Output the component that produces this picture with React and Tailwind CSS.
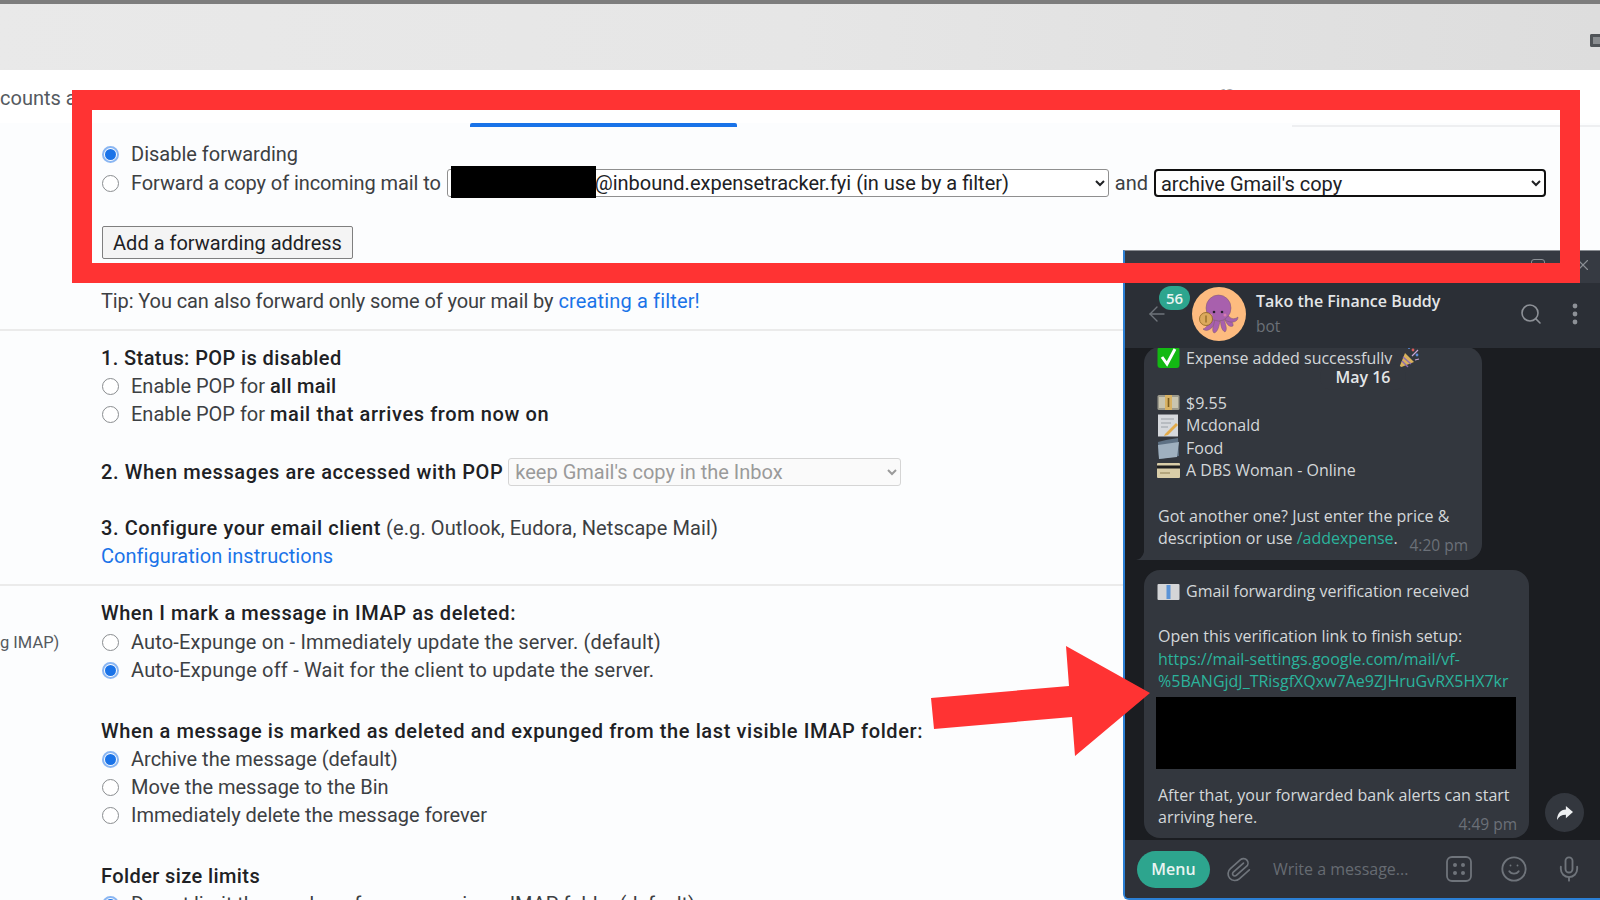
import React from "react";
import { ArrowLeft, Search, Paperclip, Smile, Mic, X } from "lucide-react";

function Radio({ on }) {
  return on ? (
    <span className="ml-[1px] mr-[12px] flex h-[17px] w-[17px] shrink-0 items-center justify-center rounded-full border-2 border-[#8ab6f2]">
      <span className="h-[11px] w-[11px] rounded-full bg-[#1a73e8]" />
    </span>
  ) : (
    <span className="ml-[1px] mr-[12px] h-[17px] w-[17px] shrink-0 rounded-full border-[1.5px] border-[#8a8d90] bg-white" />
  );
}

function Row({ children, className = "" }) {
  return <div className={"flex h-7 items-center whitespace-nowrap " + className}>{children}</div>;
}

function RadioRow({ on, children, className = "" }) {
  return (
    <Row className={className}>
      <Radio on={on} />
      <span>{children}</span>
    </Row>
  );
}

const B = ({ children, className = "tracking-[0.6px]" }) => (
  <b className={"font-medium text-[#202124] " + className}>{children}</b>
);

function Octopus() {
  return (
    <svg viewBox="0 0 54 54" className="h-[54px] w-[54px] shrink-0">
      <circle cx="27" cy="27" r="27" fill="#fdbb7f" />
      <g fill="#a860ad" stroke="#7d5a6a" strokeWidth="0.5">
        <path d="M19 30 C17 36 15 41 11 42 C15 46 21 41 24 35 Z" />
        <path d="M23 32 C22 38 19 43 22 46 C26 45 27 39 28 34 Z" />
        <path d="M28 32 C29 38 29 43 33 45 C36 42 33 37 32 32 Z" />
        <path d="M32 31 C34 36 37 41 41 39 C42 36 38 33 36 29 Z" />
        <path d="M35 27 C38 32 42 33 46 30 C46 35 40 37 33 33 Z" />
        <ellipse cx="26.5" cy="21" rx="12.5" ry="13" />
      </g>
      <circle cx="22" cy="25" r="1.3" fill="#2a1f2f" />
      <circle cx="30" cy="25" r="1.3" fill="#2a1f2f" />
      <circle cx="19" cy="28" r="1.5" fill="#d77ab0" />
      <circle cx="33" cy="28" r="1.5" fill="#d77ab0" />
      <circle cx="14" cy="32" r="6.5" fill="#dca95c" stroke="#8a6420" strokeWidth="0.8" />
      <path d="M14 28.5 v7" stroke="#8a6420" strokeWidth="1.2" />
    </svg>
  );
}

const Em = ({ children, className = "" }) => (
  <svg viewBox="0 0 23 23" className={"h-[23px] w-[23px] shrink-0 " + className}>
    {children}
  </svg>
);

const CheckEmoji = () => (
  <Em>
    <rect x="0.5" y="1" width="22" height="21" rx="3" fill="#13b913" />
    <path d="M5 11 L10 18 L18 3" fill="none" stroke="#fff" strokeWidth="3" />
  </Em>
);
const Money = () => (
  <Em>
    <rect x="0.5" y="4" width="22" height="15" rx="1.5" fill="#9c9a8c" />
    <rect x="2" y="6" width="19" height="11" fill="#c9c5b0" />
    <rect x="8" y="4" width="7" height="15" fill="#d8b264" />
    <path d="M11.5 7v9" stroke="#7a5c1e" strokeWidth="1.6" />
  </Em>
);
const Memo = () => (
  <Em>
    <rect x="1" y="0.5" width="20" height="22" fill="#d5d8dc" />
    <path d="M4 5h13M4 9h10M4 13h7" stroke="#9aa0a6" strokeWidth="1" />
    <path d="M8 20 L19 9 L21 11 L11 21 L7 22Z" fill="#e3ab4a" />
  </Em>
);
const Folder = () => (
  <Em>
    <path d="M1 5 L9 3 L21 1 L22 19 L2 22 Z" fill="#5e7184" />
    <path d="M1 8 L22 5 L20 20 L2 22 Z" fill="#9fb0bf" />
  </Em>
);
const Card = () => (
  <Em>
    <rect x="0" y="4" width="23" height="15" rx="1" fill="#d9cda8" />
    <rect x="0" y="6.5" width="23" height="3" fill="#1f1f1f" />
    <path d="M3 14h10" stroke="#a3946a" strokeWidth="1.4" />
  </Em>
);
const Ledger = () => (
  <Em>
    <rect x="0.5" y="4" width="22" height="16" rx="1" fill="#d4d5d7" />
    <rect x="9.5" y="5" width="4" height="14" fill="#5b93d6" />
  </Em>
);
const Popper = () => (
  <Em className="ml-[5px]">
    <path d="M2 22 L8 7 L17 16 Z" fill="#d9b15c" />
    <path d="M5 15 L11 21 M6 11 L14 18" stroke="#8c6bb1" strokeWidth="1.4" />
    <circle cx="16" cy="4" r="1.4" fill="#d85a5a" />
    <circle cx="20" cy="9" r="1.4" fill="#5a8ad8" />
    <circle cx="12" cy="2" r="1.1" fill="#5a8ad8" />
    <path d="M15 10 L21 4 M18 14 L22 13" stroke="#c9a6d8" strokeWidth="1.2" />
  </Em>
);

function Line({ children, className = "" }) {
  return <div className={"flex h-[22.6px] items-center whitespace-nowrap " + className}>{children}</div>;
}

const EmLine = ({ icon, children }) => (
  <Line className="-ml-[1px]">
    <span className="mr-[6px] flex w-[23px] justify-center">{icon}</span>
    <span>{children}</span>
  </Line>
);

function TelegramWindow() {
  return (
    <section className="absolute left-[1123px] top-[250px] flex h-[650px] w-[477px] flex-col overflow-hidden rounded-bl-[6px] border-b-2 border-l-2 border-t border-b-[#2b7fd4] border-l-[#2b7fd4] border-t-[#8a8d92] bg-[#1b1d21] font-['Open_Sans',sans-serif] text-[16px] text-[#d4d7da]">
      <div className="flex h-[32px] shrink-0 items-start justify-end gap-[29px] bg-[#363a42] pr-[8px] pt-[5px] text-[#8b8f95]">
        <span className="mt-[3px] h-[14px] w-[14px] rounded-[3px] border border-[#8b8f95]" />
        <X size={18} strokeWidth={1.5} />
      </div>
      <header className="relative flex h-[65px] shrink-0 items-center bg-[#2b2f36] pb-[3px] pl-[20px] pr-[22px]">
        <ArrowLeft size={24} strokeWidth={1.4} className="mr-[23px] text-[#6f747b]" />
        <Octopus />
        <div className="ml-[10px] flex flex-1 flex-col leading-[25px]">
          <span className="text-[16px] font-semibold text-[#e4e6e8]">Tako the Finance Buddy</span>
          <span className="text-[15.5px] text-[#6c7178]">bot</span>
        </div>
        <Search size={24} strokeWidth={1.6} className="mr-[29px] text-[#8d9197]" />
        <svg viewBox="0 0 6 22" className="h-[22px] w-[6px] text-[#8d9197]" fill="currentColor">
          <circle cx="3" cy="3" r="2.4" />
          <circle cx="3" cy="11" r="2.4" />
          <circle cx="3" cy="19" r="2.4" />
        </svg>
        <span className="absolute left-[34px] top-[3px] flex h-[24px] w-[31px] items-center justify-center rounded-full bg-[#2da58e] text-[15px] font-semibold text-[#e8f4f1]">
          56
        </span>
      </header>
      <div className="relative flex flex-1 flex-col justify-end gap-[10px] overflow-hidden pb-[2px] pl-[19px] leading-[22.6px]">
        <div className="relative w-[338px] shrink-0 rounded-[16px] rounded-bl-none bg-[#33373e] pb-[10px] pl-[14px] pr-[14px]">
          <EmLine icon={<CheckEmoji />}>
            <span className="flex items-center">
              Expense added successfully
              <Popper />
            </span>
          </EmLine>
          <Line />
          <EmLine icon={<Money />}>$9.55</EmLine>
          <EmLine icon={<Memo />}>Mcdonald</EmLine>
          <EmLine icon={<Folder />}>Food</EmLine>
          <EmLine icon={<Card />}>A DBS Woman - Online</EmLine>
          <Line />
          <Line>Got another one? Just enter the price &amp;</Line>
          <Line className="justify-between">
            <span>
              description or use <span className="text-[#2bb39c]">/addexpense</span>.
            </span>
            <span className="mt-[14px] text-[15.5px] text-[#6b7078]">4:20 pm</span>
          </Line>
          <svg viewBox="0 0 8 8" className="absolute -left-[8px] bottom-0 h-[8px] w-[8px] text-[#33373e]" fill="currentColor">
            <path d="M8 0 V8 H0 Q6 7 8 0Z" />
          </svg>
        </div>
        <div className="w-[385px] shrink-0 rounded-[16px] bg-[#33373e] pb-[9px] pl-[14px] pr-[12px] pt-[10px]">
          <EmLine icon={<Ledger />}>Gmail forwarding verification received</EmLine>
          <Line />
          <Line>Open this verification link to finish setup:</Line>
          <Line className="text-[#2bb39c]">https://mail-settings.google.com/mail/vf-</Line>
          <Line className="text-[#2bb39c]">%5BANGjdJ_TRisgfXQxw7Ae9ZJHruGvRX5HX7kr</Line>
          <div className="-ml-[2px] mb-[15px] mt-[4px] h-[72px] w-[360px] bg-black" />
          <Line>After that, your forwarded bank alerts can start</Line>
          <Line className="justify-between">
            <span>arriving here.</span>
            <span className="mt-[13px] text-[15.5px] text-[#6b7078]">4:49 pm</span>
          </Line>
        </div>
        <span className="absolute left-[195px] top-[16px] flex h-[26px] w-[86px] items-center justify-center rounded-[13px] bg-[#33373e] font-semibold text-[#e4e6e8]">
          May 16
        </span>
        <button className="absolute bottom-[8px] right-[16px] flex h-[39px] w-[39px] items-center justify-center rounded-full bg-[#33373e] text-[#eef0f2]">
          <svg viewBox="0 0 20 18" className="h-[16px] w-[18px]" fill="currentColor">
            <path d="M11 1 L19 8 L11 15 V11 C6 11 3 13 1 17 C1 10 5 5 11 5 Z" />
          </svg>
        </button>
      </div>
      <footer className="flex h-[58px] shrink-0 items-center bg-[#2e3138] pl-[12px] text-[#6f747b]">
        <button className="mr-[15px] flex h-[37px] w-[73px] items-center justify-center rounded-full bg-[#2da58e] font-semibold text-[#e8f4f1]">
          Menu
        </button>
        <Paperclip size={27} strokeWidth={1.5} className="mr-[21px] rotate-[4deg]" />
        <span className="w-[173px] text-[#666b72]">Write a message...</span>
        <svg viewBox="0 0 26 26" className="mr-[28px] h-[26px] w-[26px]" fill="none" stroke="currentColor" strokeWidth="1.8">
          <rect x="1" y="1" width="24" height="24" rx="5" />
          <g fill="currentColor" stroke="none">
            <circle cx="9" cy="9" r="2" />
            <circle cx="17" cy="9" r="2" />
            <circle cx="9" cy="17" r="2" />
            <circle cx="17" cy="17" r="2" />
          </g>
        </svg>
        <Smile size={28} strokeWidth={1.6} className="mr-[27px]" />
        <Mic size={28} strokeWidth={1.6} />
      </footer>
    </section>
  );
}

const selectCls = "h-[28px] appearance-auto rounded-[3px] bg-white text-[20px] leading-[24px] text-[#202124]";

export default function App() {
  return (
    <div className="relative h-[900px] w-[1600px] overflow-hidden bg-[#fcfdfe] font-['Roboto',sans-serif] text-[20px] text-[#3c4043]">
      <div className="flex h-[70px] items-center justify-end border-t-4 border-t-[#7d7d7d] bg-gradient-to-r from-[#e9e9e9] via-[#e6e6e6] to-[#dddddd]">
        <span className="mt-[6px] h-[13px] w-[10px] rounded-l-[2px] border-[3px] border-r-0 border-[#505458] bg-[#8a8d90]" />
      </div>

      <nav className="flex h-[53px] items-start gap-[40px] whitespace-nowrap bg-white pt-[13px] text-[#555a5f]">
        <span>counts and Import</span>
        <span>Filters and Blocked Addresses</span>
        <span className="font-medium text-[#1a73e8]">Forwarding and POP/IMAP</span>
        <span>Add-ons</span>
        <span>Chat and Meet</span>
        <span>Advanced</span>
        <span>Offline</span>
        <span>Themes</span>
      </nav>
      <div className="flex h-[4px]">
        <span className="ml-[470px] w-[267px] rounded-t-[2px] bg-[#1a73e8]" />
        <span className="ml-[555px] h-[2px] flex-1 self-end bg-[#eeeff1]" />
      </div>

      <main className="pt-[13px]">
        <div className="pl-[101px]">
          <RadioRow on>Disable forwarding</RadioRow>
          <Row className="mt-[1px]">
            <Radio />
            <span className="mr-[6px] tracking-[-0.09px]">Forward a copy of incoming mail to</span>
            <span className="relative flex">
              <select className={selectCls + " w-[662px] border border-[#8f8f8f] pl-[143px]"} defaultValue="a">
                <option value="a">@inbound.expensetracker.fyi (in use by a filter)</option>
              </select>
              <span className="absolute -top-[3px] left-[4px] h-[32px] w-[145px] bg-black" />
            </span>
            <span className="mx-[6px]">and</span>
            <select className={selectCls + " w-[392px] rounded-[4px] border-2 border-[#101010] pl-[1px]"} defaultValue="a">
              <option value="a">archive Gmail's copy</option>
            </select>
          </Row>
          <button className="ml-[1px] mt-[29px] h-[33px] w-[251px] rounded-[2px] border border-[#7f7f7f] bg-[#f4f4f4] text-[#202124]">
            Add a forwarding address
          </button>
          <Row className="mt-[28px]">
            <span className="tracking-[-0.1px]">Tip: You can also forward only some of your mail by </span>
            <a className="ml-[5px] tracking-[0.15px] text-[#1a73e8]">creating a filter!</a>
          </Row>
        </div>
        <hr className="mt-[14px] h-[2px] w-[1123px] border-0 bg-[#ebebeb]" />
        <div className="pl-[101px] pt-[13px]">
          <Row><B className="tracking-[0.4px]">1. Status: POP is disabled</B></Row>
          <RadioRow>Enable POP for <B className="tracking-[0.25px]">all mail</B></RadioRow>
          <RadioRow>Enable POP for <B>mail that arrives from now on</B></RadioRow>
          <Row className="mt-[30px]">
            <B>2. When messages are accessed with POP</B>
            <select disabled className="ml-[5px] h-[28px] w-[393px] rounded-[3px] border border-[#d5d5d5] bg-[#fafafa] pl-[2px] text-[20px] text-[#9a9a9a]" defaultValue="a">
              <option value="a">keep Gmail's copy in the Inbox</option>
            </select>
          </Row>
          <Row className="mt-[28px]"><span className="tracking-[0.1px]"><B>3. Configure your email client</B> (e.g. Outlook, Eudora, Netscape Mail)</span></Row>
          <Row><a className="tracking-[0.05px] text-[#1a73e8]">Configuration instructions</a></Row>
        </div>
        <hr className="mt-[14px] h-[2px] w-[1123px] border-0 bg-[#ebebeb]" />
        <div className="pl-[101px] pt-[13px]">
          <Row><B className="tracking-[0.55px]">When I mark a message in IMAP as deleted:</B></Row>
          <Row className="mt-[1px]">
            <span className="-ml-[101px] mt-[3px] w-[101px] text-[16.5px] text-[#555a5f]">g IMAP)</span>
            <Radio />
            <span className="tracking-[0.16px]">Auto-Expunge on - Immediately update the server. (default)</span>
          </Row>
          <RadioRow on><span className="tracking-[0.19px]">Auto-Expunge off - Wait for the client to update the server.</span></RadioRow>
          <Row className="mt-[33px]"><B>When a message is marked as deleted and expunged from the last visible IMAP folder:</B></Row>
          <RadioRow on>Archive the message (default)</RadioRow>
          <RadioRow>Move the message to the Bin</RadioRow>
          <RadioRow>Immediately delete the message forever</RadioRow>
          <Row className="mt-[33px]"><B className="tracking-[0.4px]">Folder size limits</B></Row>
          <RadioRow on><span className="tracking-[-0.06px]">Do not limit the number of messages in an IMAP folder (default)</span></RadioRow>
        </div>
      </main>

      <TelegramWindow />

      <div className="pointer-events-none absolute left-[72px] top-[90px] h-[193px] w-[1508px] border-[20px] border-[#ff3333]" />
      <svg viewBox="0 0 240 120" className="pointer-events-none absolute left-[925px] top-[640px] h-[120px] w-[240px]">
        <path d="M6 58 L144 46 L141 6 L225 53 L150 116 L147 77 L9 89 Z" fill="#ff3333" />
      </svg>
    </div>
  );
}
